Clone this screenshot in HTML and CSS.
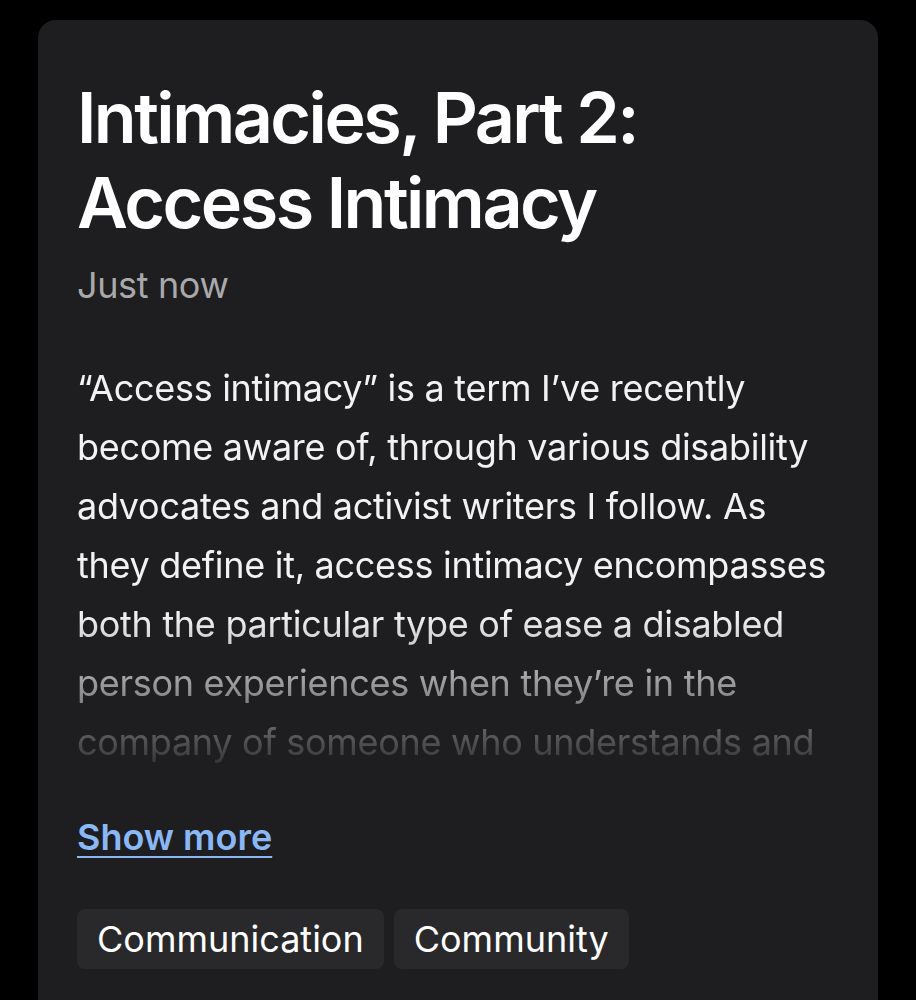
FILE: index.html
```html
<!DOCTYPE html>
<html lang="en">
<head>
<meta charset="utf-8">
<title>Intimacies, Part 2: Access Intimacy</title>
<link rel="stylesheet" href="styles.css">
</head>
<body>
<article class="card">
  <h1 class="title">Intimacies, Part 2: Access Intimacy</h1>
  <div class="date">Just now</div>
  <div class="excerpt">
    <p>“Access intimacy” is a term I’ve recently become aware of, through various disability advocates and activist writers I follow. As they define it, access intimacy encompasses both the particular type of ease a disabled person experiences when they’re in the company of someone who understands and supports their access needs without being asked.</p>
  </div>
  <a class="more" href="#">Show more</a>
  <div class="tags">
    <span class="tag">Communication</span>
    <span class="tag">Community</span>
  </div>
</article>
</body>
</html>
```

FILE: styles.css
```css
* { box-sizing: border-box; }
html, body { margin: 0; padding: 0; background: #000; }
body {
  font-family: "Inter", "Noto Sans", sans-serif;
  color: #f4f4f4;
  padding: 20px 38px 0;
}
.card {
  background: #1e1d1f;
  border-radius: 18px;
  padding: 55px 39px 40px;
  min-height: 1100px;
}
.title {
  margin: 0;
  font-size: 70px;
  line-height: 85px;
  font-weight: 600;
  letter-spacing: -0.036em;
  color: #fff;
}
.date {
  margin-top: 16px;
  font-size: 36px;
  line-height: 48px;
  color: #a9a9ab;
  letter-spacing: -0.01em;
}
.excerpt {
  margin-top: 50px;
  height: 413px;
  overflow: hidden;
  -webkit-mask-image: linear-gradient(to bottom, #000 0, #000 256px, transparent 424px);
  mask-image: linear-gradient(to bottom, #000 0, #000 256px, transparent 424px);
}
.excerpt p {
  margin: 0;
  font-size: 36px;
  line-height: 59px;
  letter-spacing: -0.008em;
  color: #f2f2f2;
}
.more {
  display: inline-block;
  margin-top: 41px;
  font-size: 36px;
  line-height: 48px;
  font-weight: 600;
  color: #8ab8f5;
  text-decoration: underline;
  text-underline-offset: 6px;
  text-decoration-thickness: 2px;
}
.tags {
  display: flex;
  gap: 10px;
  margin-top: 48px;
}
.tag {
  background: #29292b;
  border-radius: 8px;
  height: 60px;
  padding: 0 20px;
  display: flex;
  align-items: center;
  font-size: 36px;
  color: #fff;
}
```
